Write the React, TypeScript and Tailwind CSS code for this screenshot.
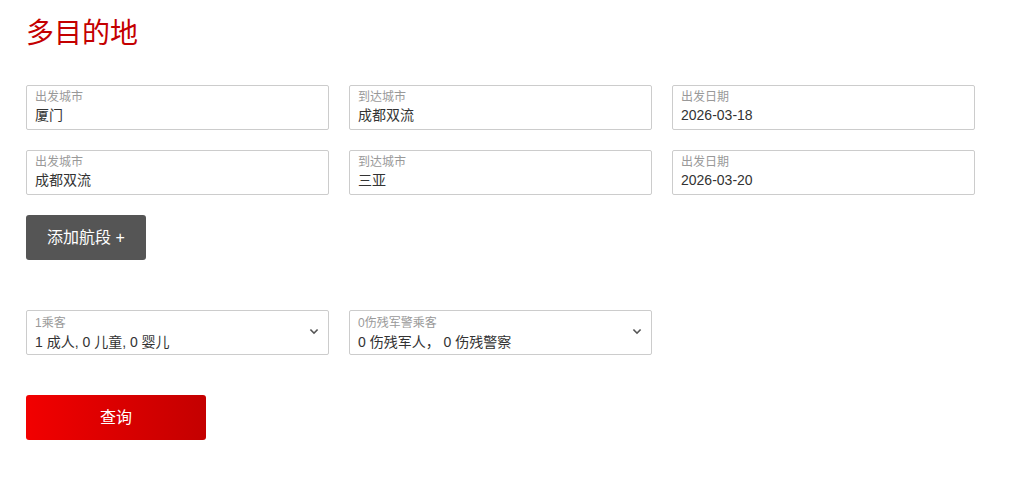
const font = { fontFamily: '"Liberation Sans", "Noto Sans CJK SC", sans-serif' }

function Field({ label, value, select }: { label: string; value: string; select?: boolean }) {
  return (
    <div
      className={
        select
          ? 'relative h-[45px] w-[303px] rounded-[2px] border border-[#cccccc] bg-white pl-2 pt-[4px]'
          : 'relative h-[45px] w-[303px] rounded-[2px] border border-[#cccccc] bg-white pl-2 pt-[3px]'
      }
    >
      <div className="text-[12px] leading-[16px] text-[#999999]">{label}</div>
      <div className={select ? 'mt-[1px] text-[14px] leading-[20px] text-[#333333]' : 'text-[14px] leading-[20px] text-[#333333]'}>
        {value}
      </div>
      {select && (
        <svg className="absolute right-[9px] top-[17px] h-[8px] w-[10px]" viewBox="0 0 10 8" fill="#555555">
          <path d="M0.8 2 L5 6.2 L9.2 2 L8 0.9 L5 3.9 L2 0.9 Z" />
        </svg>
      )}
    </div>
  )
}

export default function App() {
  const legs = [
    { from: '厦门', to: '成都双流', date: '2026-03-18' },
    { from: '成都双流', to: '三亚', date: '2026-03-20' },
  ]
  return (
    <div className="min-h-[480px] w-[1015px] bg-white pl-[26px] pt-[14px]" style={font}>
      <h1 className="text-[28px] leading-[40px] text-[#c40000]">多目的地</h1>
      <div className="mt-[31px] flex flex-col gap-5">
        {legs.map((l, i) => (
          <div key={i} className="flex gap-5">
            <Field label="出发城市" value={l.from} />
            <Field label="到达城市" value={l.to} />
            <Field label="出发日期" value={l.date} />
          </div>
        ))}
      </div>
      <button
        type="button"
        className="mt-5 h-[45px] w-[120px] rounded-[3px] bg-[#555555] text-[16px] text-white"
      >
        添加航段 +
      </button>
      <div className="mt-[50px] flex gap-5">
        <Field label="1乘客" value="1 成人, 0 儿童, 0 婴儿" select />
        <Field label="0伤残军警乘客" value="0 伤残军人， 0 伤残警察" select />
      </div>
      <button
        type="button"
        className="mt-10 h-[45px] w-[180px] rounded-[3px] bg-gradient-to-r from-[#f20000] to-[#c40000] text-[16px] text-white"
      >
        查询
      </button>
    </div>
  )
}
